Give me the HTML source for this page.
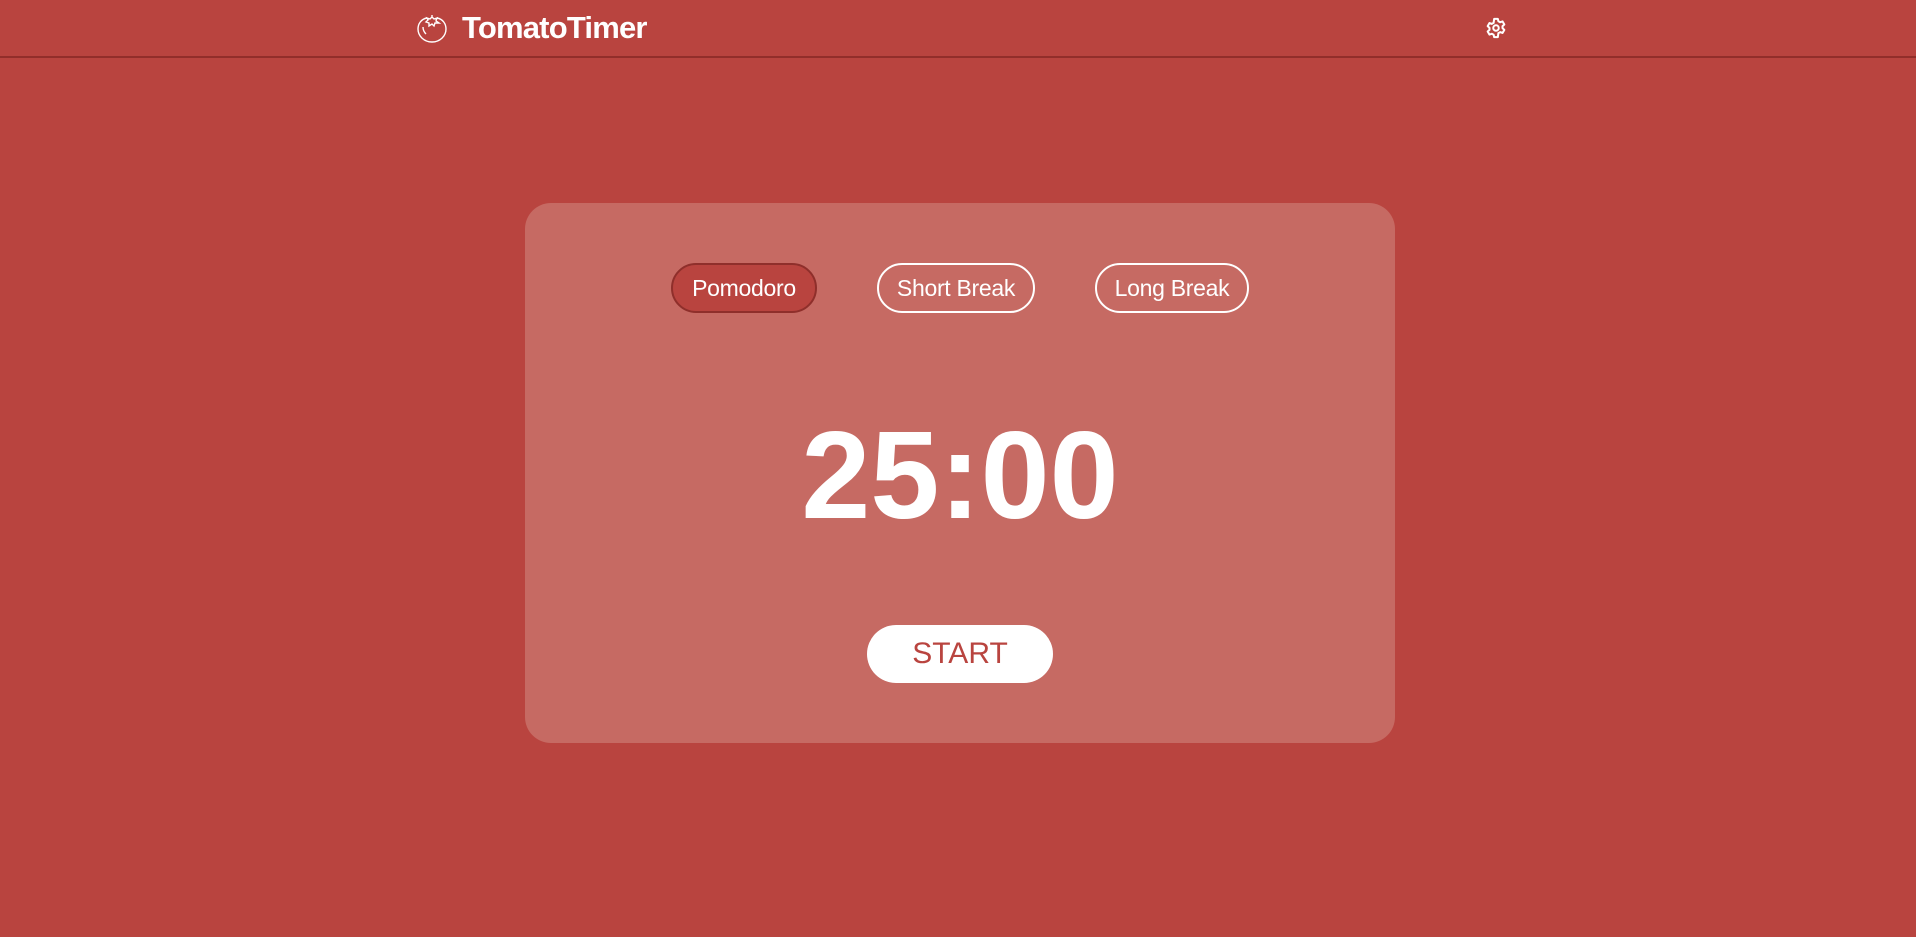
<!DOCTYPE html>
<html><head><meta charset="utf-8"><style>
*{margin:0;padding:0;box-sizing:border-box}
body{width:1916px;height:937px;background:#b9443f;font-family:"Liberation Sans",sans-serif;color:#fff;position:relative;overflow:hidden}
.hdr{position:absolute;left:0;top:0;width:1916px;height:58px;border-bottom:2px solid #922e2a}
.logo{position:absolute;left:416px;top:12px}
.title{position:absolute;left:462px;top:10px;font-size:31px;font-weight:bold;letter-spacing:-0.8px}
.gear{position:absolute;left:1485px;top:17px}
.card{position:absolute;left:525px;top:203px;width:870px;height:540px;border-radius:26px;background:#c66a63}
.tab{position:absolute;top:60px;height:50px;border:2px solid #fff;border-radius:25px;font-size:23px;line-height:46px;text-align:center;letter-spacing:-0.3px}
.tab.a{background:#b9443f;border-color:#8f2f2b}
.time{position:absolute;left:0;width:870px;top:198px;text-align:center;font-size:124px;font-weight:bold;line-height:150px}
.start{position:absolute;left:342px;top:422px;width:186px;height:58px;border-radius:29px;background:#fff;color:#b9443f;font-size:30px;line-height:58px;text-align:center}
</style></head><body>
<div class="hdr">
<svg class="logo" width="32" height="32" viewBox="0 0 32 32" fill="none" stroke="#fff" stroke-width="1.4"><path d="M11 6C5 7 2 12 2 17c0 7 6 13 14 13s14-6 14-13c0-5-3-10-9-11"/><path d="M16 3v3M11 6l3 1 2-2 2 2 3-1-1 3 3 2-4 0-1 3-2-2-3 2 0-3-3-1 2-2z"/><path d="M7 15c0 3 1 5 3 7"/></svg>
<div class="title">TomatoTimer</div>
<svg class="gear" width="22" height="22" viewBox="0 0 24 24" fill="none" stroke="#fff" stroke-width="2.2" stroke-linejoin="round"><path d="M10 2h4l.6 2.6 2 1.1 2.5-.9 2 3.4-2 1.8v2.2l2 1.8-2 3.4-2.5-.9-2 1.1L14 22h-4l-.6-2.6-2-1.1-2.5.9-2-3.4 2-1.8V11.8l-2-1.8 2-3.4 2.5.9 2-1.1z"/><circle cx="12" cy="12" r="3"/></svg>
</div>
<div class="card">
<div class="tab a" style="left:146px;width:146px">Pomodoro</div>
<div class="tab" style="left:352px;width:158px">Short Break</div>
<div class="tab" style="left:570px;width:154px">Long Break</div>
<div class="time">25:00</div>
<div class="start">START</div>
</div>
</body></html>
